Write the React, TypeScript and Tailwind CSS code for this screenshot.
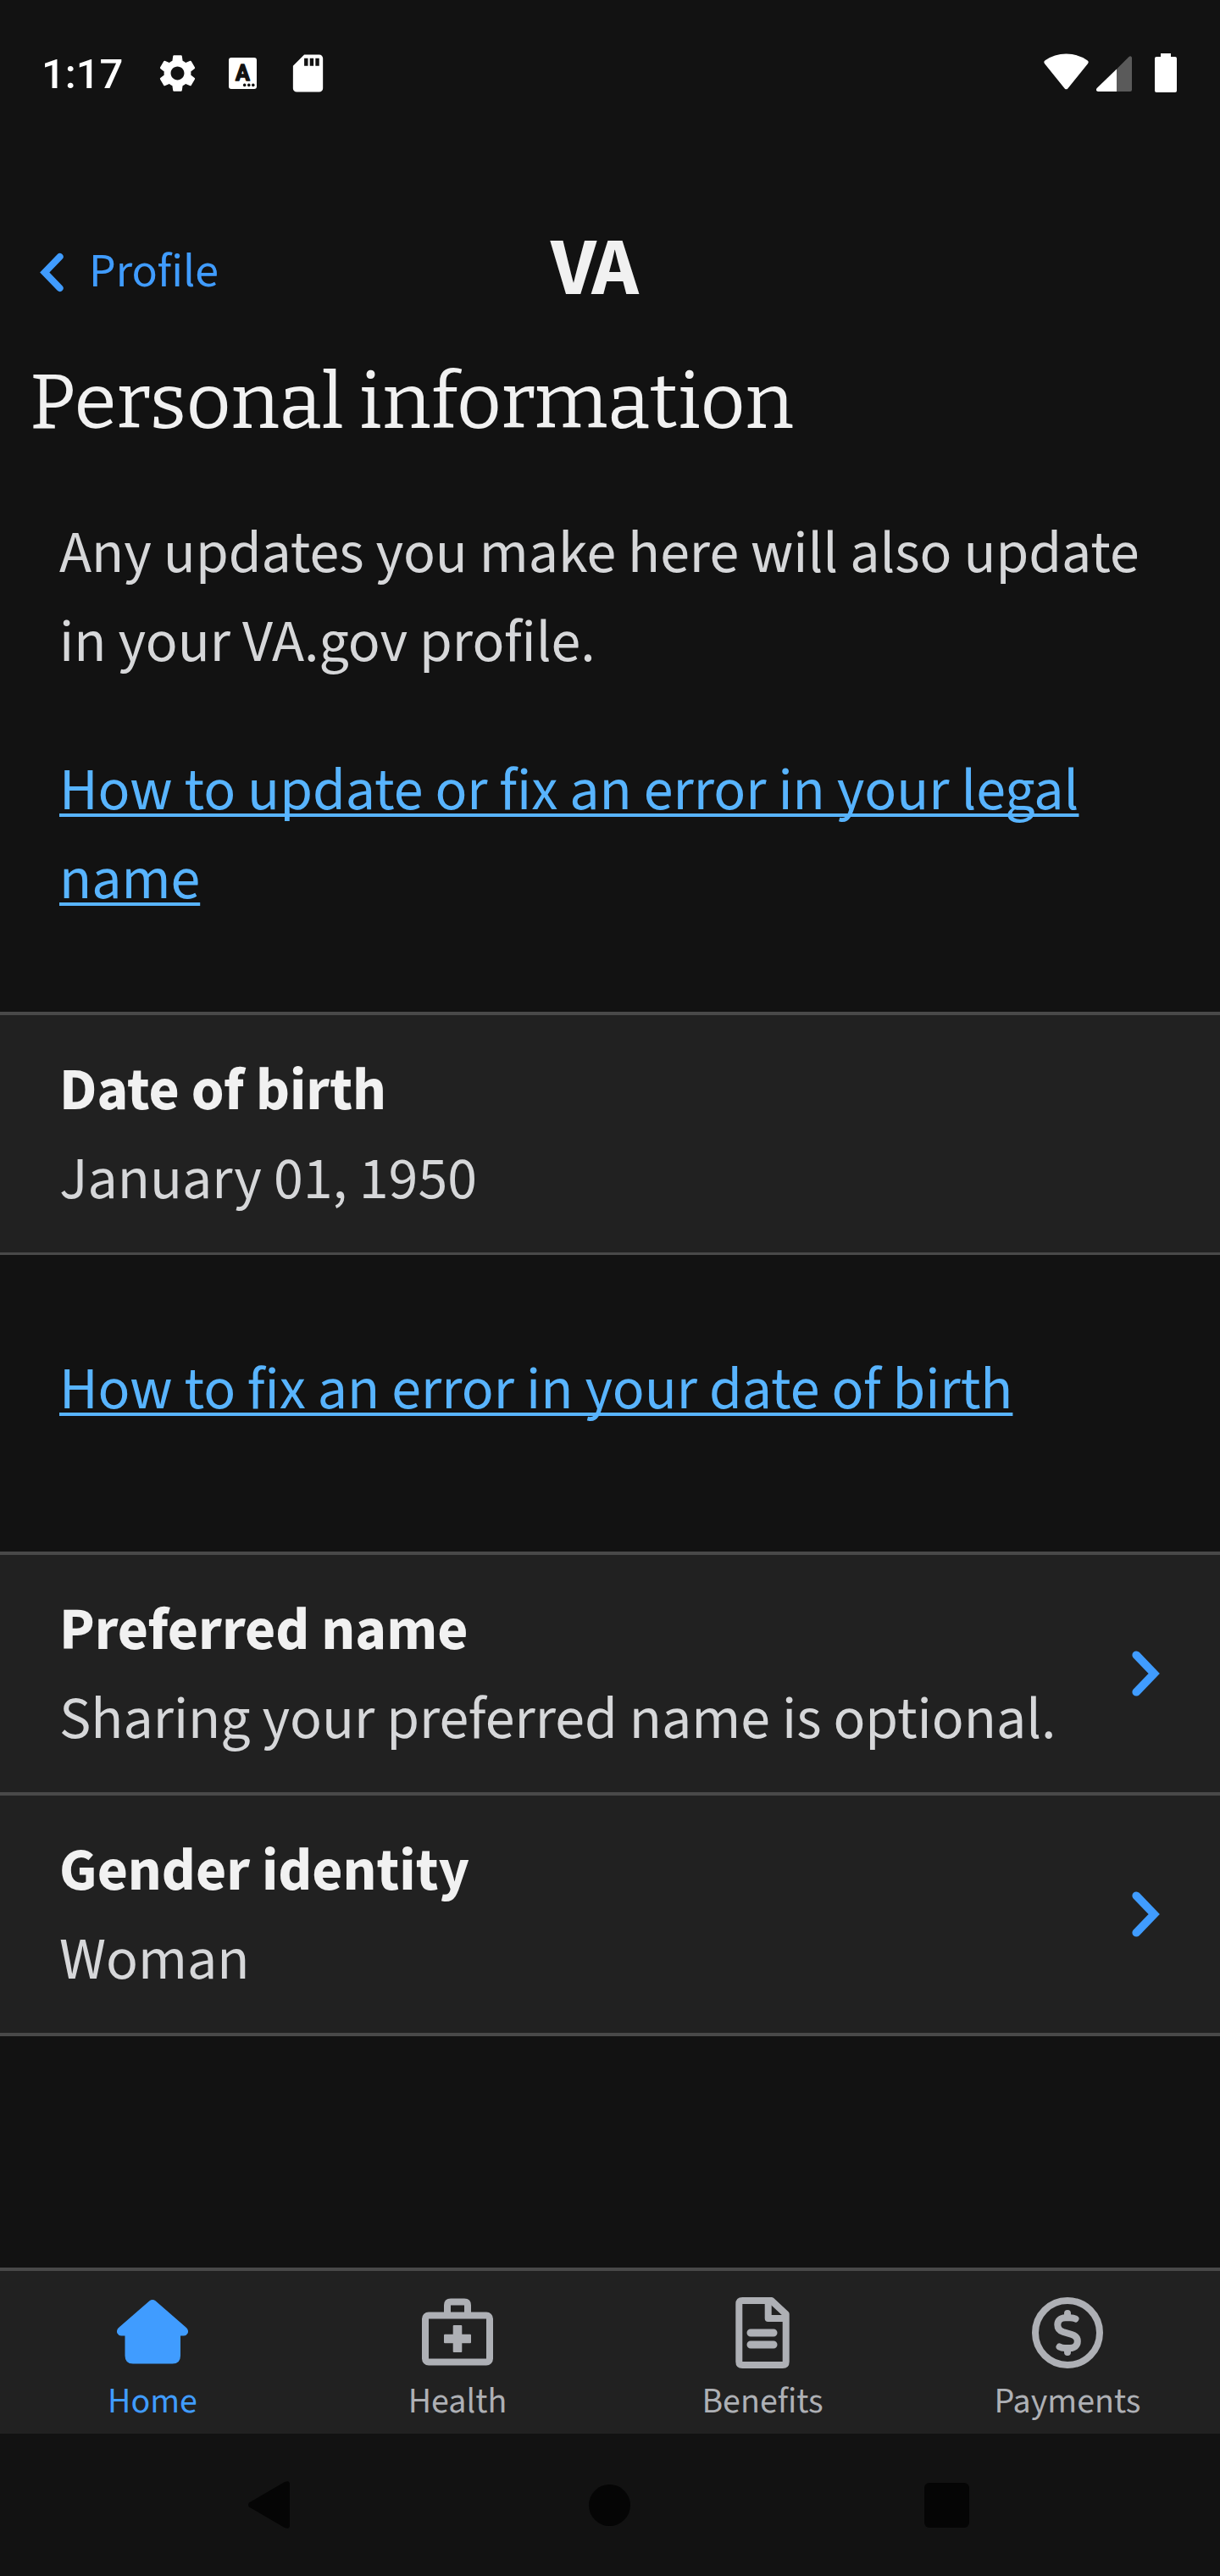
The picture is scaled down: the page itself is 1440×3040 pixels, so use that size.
import type { ReactNode } from "react";
import { MdSdCard, MdSettings } from "react-icons/md";

function Chevron({ className }: { className: string }) {
  return (
    <svg viewBox="0 0 33 54" className={className} fill="none" stroke="currentColor" strokeWidth="9.6">
      <path d="M5.2 5.2 26.2 27 5.2 48.8" strokeLinecap="round" strokeLinejoin="miter" />
    </svg>
  );
}

function StatusBar() {
  return (
    <div className="flex h-[172px] items-start justify-between pt-[59px] pr-[51px] pl-[49px] text-white">
      <div className="flex h-[54px] items-center">
        <span className="w-[134px] pt-[3px] font-[Roboto] text-[49px] leading-[54px] font-medium">1:17</span>
        <MdSettings className="size-[53px]" />
        <svg viewBox="0 0 33 37" className="ml-[34px] h-[37px] w-[33px]">
          <rect width="33" height="37" rx="3" fill="#fff" />
          <text x="16.5" y="26.5" textAnchor="middle" fontFamily="Roboto" fontSize="25" fontWeight="700" fill="#121212" stroke="#121212" strokeWidth="1.4" strokeLinejoin="round">
            A
          </text>
          <circle cx="18.7" cy="32.4" r="1.8" fill="#121212" />
          <circle cx="23.8" cy="32.4" r="1.8" fill="#121212" />
          <circle cx="28.8" cy="32.4" r="1.8" fill="#121212" />
        </svg>
        <MdSdCard className="ml-[34px] size-[53px]" />
      </div>
      <div className="flex h-[54px] items-start pt-1">
        <svg viewBox="0 0 53 43" className="h-[43px] w-[53px]" fill="currentColor">
          <path d="M1.3 12.4Q-.9 10 1.6 8.300Q12.500 .5 26.500 .5T51.400 8.300Q53.900 10 51.700 12.400L28.300 41.400Q26.500 43.300 24.700 41.400Z" />
        </svg>
        <svg viewBox="0 0 42 43" className="mt-[3px] ml-[9px] h-[43px] w-[42px]">
          <path d="M24 15.500V42H2Q-1.500 41 .7 38Z" fill="#fff" />
          <path d="M24 15.500 38.500 1Q41 -1 42 2V40Q42 42 40 42H24Z" fill="#5a5a5a" />
        </svg>
        <svg viewBox="0 0 26 46" className="ml-[27px] h-[46px] w-[26px]" fill="currentColor">
          <path d="M7 0H19V4H24Q26 4 26 6V44Q26 46 24 46H2Q0 46 0 44V6Q0 4 2 4H7Z" />
        </svg>
      </div>
    </div>
  );
}

function Header() {
  return (
    <header className="grid h-[248px] grid-cols-[650px_1fr] content-start pt-[98px]">
      <a className="flex h-[102px] items-center pl-[47px] text-[#409cff]">
        <Chevron className="h-[47px] w-[28px] -scale-x-100" />
        <span className="ml-[30px] text-[56px] leading-[80px]">Profile</span>
      </a>
      <span className="-mt-[4px] h-[102px] text-[97px] leading-[102px] font-bold tracking-[-4px] text-[#f1f1f1]">VA</span>
    </header>
  );
}

function ListRow({ title, value, chevron }: { title: string; value: string; chevron?: boolean }) {
  return (
    <div className="flex h-[284px] items-center justify-between border-t-4 border-[#494949] bg-[#212121] pr-[71px] pl-[70px]">
      <div className="h-[207px] leading-[104px]">
        <p className="leading-[105px] font-bold text-[#f1f1f1]">{title}</p>
        <p className="text-[#d6d7d9]">{value}</p>
      </div>
      {chevron && <Chevron className="h-[54px] w-[33px] text-[#409cff]" />}
    </div>
  );
}

function TextLink({ children }: { children: ReactNode }) {
  return (
    <a className="text-[#58b4ff] underline decoration-4 underline-offset-[5px] [text-decoration-skip-ink:none]">{children}</a>
  );
}

function Tab({ label, active, children }: { label: string; active?: boolean; children: ReactNode }) {
  return (
    <div className={active ? "flex flex-col items-center pt-[31px] text-[#409cff]" : "flex flex-col items-center pt-[31px] text-[#aeb0b5]"}>
      <svg viewBox="0 0 84 84" className="size-[84px]" fill="none" stroke="currentColor" strokeWidth="8">
        {children}
      </svg>
      <span className="mt-[11px] text-[42px] leading-[56px]">{label}</span>
    </div>
  );
}

function TabBar() {
  return (
    <nav className="grid h-[196px] grid-cols-4 border-t-4 border-[#494949] bg-[#212121]">
      <Tab label="Home" active>
        <path
          d="M38.500 4.200Q42 1.800 45.500 4.200L82 36Q85 39 83.600 42.500 82 45.500 79 45.500H75V69Q75 78.500 65.500 78.500H19Q9.500 78.500 9.500 69V45.500H5Q2 45.500 .4 42.500 -1 39 2 36Z"
          fill="currentColor"
          stroke="none"
        />
      </Tab>
      <Tab label="Health">
        <rect x="4" y="21.500" width="76" height="55" rx="4" />
        <path d="M30 20V9.500Q30 5.500 34 5.500H50Q54 5.500 54 9.500V20" />
        <g fill="currentColor" stroke="none">
          <rect x="36.700" y="33" width="10.600" height="32" rx="1" />
          <rect x="26" y="43.700" width="32" height="10.600" rx="1" />
        </g>
      </Tab>
      <Tab label="Benefits">
        <path d="M18.300 4H52.500L69.700 20V76Q69.700 80 65.700 80H18.300Q14.300 80 14.300 76V8Q14.300 4 18.300 4Z" strokeLinejoin="round" />
        <path d="M48.700 4V25H69" strokeLinejoin="round" />
        <path d="M28 42H55M28 56H55" strokeWidth="9" strokeLinecap="round" />
      </Tab>
      <Tab label="Payments">
        <circle cx="42" cy="42" r="38" />
        <path d="M51.500 25.500Q49 24.200 45 24.200H39.500C33.500 24.200 30.300 28 30.300 32.500 30.300 37 33 39.700 37 41L47 44C51 45.300 53.800 48 53.800 52 53.800 57 50 60 45 60H39Q35 60 32.500 58.500" strokeLinecap="round" />
        <path d="M42 19V24M42 60V65" strokeLinecap="round" />
      </Tab>
    </nav>
  );
}

function SystemNav() {
  return (
    <div className="flex h-[168px] items-center pl-[293px] text-[#050505]">
      <svg viewBox="0 0 49 56" className="h-[56px] w-[49px]" fill="currentColor">
        <path d="M1 30.500Q-1 28 1 25.500L43 1Q49 -1.500 49 4V52Q49 57.500 43 55Z" />
      </svg>
      <div className="ml-[353px] size-[49px] rounded-full bg-[#050505]" />
      <div className="ml-[347px] size-[53px] rounded-[6px] bg-[#050505]" />
    </div>
  );
}

export default function App() {
  return (
    <div className="flex h-[3040px] w-[1440px] flex-col bg-[#121212] font-['Source_Sans_3','Noto_Sans_CJK_SC',sans-serif] text-[70px]">
      <StatusBar />
      <Header />
      <main className="flex grow flex-col tracking-[-0.03px]">
        <h1 className="h-[181px] pl-[35px] font-[Bitter,'Noto_Serif','DejaVu_Serif',serif] text-[91px] leading-[109px] text-[#f1f1f1]">
          Personal information
        </h1>
        <div className="h-[593px] px-[70px] leading-[105px]">
          <p className="text-[#d6d7d9]">
            Any updates you make here will also update in your VA.gov profile.
          </p>
          <p className="mt-[70px]">
            <TextLink>How to update or fix an error in your legal name</TextLink>
          </p>
        </div>
        <section className="h-[287px] border-b-4 border-[#494949]">
          <ListRow title="Date of birth" value="January 01, 1950" />
        </section>
        <p className="h-[350px] px-[70px] pt-[107px] leading-[105px]">
          <TextLink>How to fix an error in your date of birth</TextLink>
        </p>
        <section className="h-[572px] border-b-4 border-[#494949]">
          <ListRow title="Preferred name" value="Sharing your preferred name is optional." chevron />
          <ListRow title="Gender identity" value="Woman" chevron />
        </section>
      </main>
      <TabBar />
      <SystemNav />
    </div>
  );
}
